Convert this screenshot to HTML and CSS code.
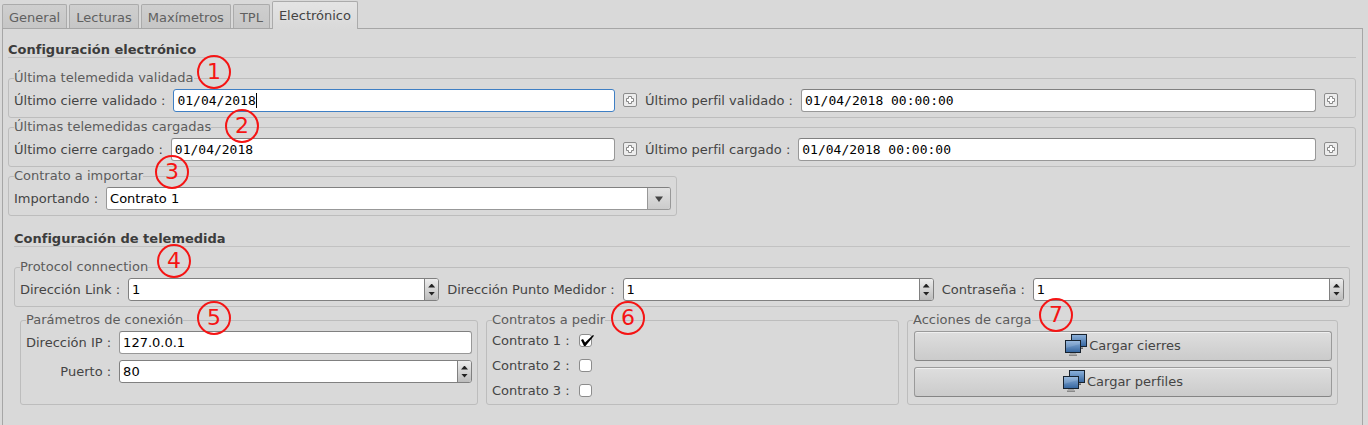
FILE: index.html
```html
<!DOCTYPE html>
<html lang="es">
<head>
<meta charset="utf-8">
<title>Configuración electrónico</title>
<link rel="stylesheet" href="styles.css">
</head>
<body>
<svg class="defs" aria-hidden="true">
  <defs>
    <linearGradient id="screen" x1="0" y1="0" x2="0" y2="1">
      <stop offset="0" stop-color="#8fb3dc"/>
      <stop offset="1" stop-color="#34659f"/>
    </linearGradient>
    <symbol id="plus" viewBox="0 0 14 14">
      <rect x="0.5" y="0.5" width="13" height="13" rx="1.5" fill="#ececec" stroke="#8c8c8c"/>
      <path d="M5.5 3.5h3v2h2v3h-2v2h-3v-2h-2v-3h2z" fill="#fff" stroke="#888"/>
    </symbol>
    <symbol id="computers" viewBox="0 0 22 22">
      <path d="M14 13h4v2h-3z" fill="#999"/>
      <path d="M16 14.500h2" stroke="#666"/>
      <rect x="6.500" y="0.500" width="15" height="12" fill="url(#screen)" stroke="#17222e"/>
      <path d="M5 19h6v1h1v2H4v-2h1z" fill="#a8a8a8"/>
      <path d="M4 21.500h8" stroke="#888"/>
      <rect x="0.500" y="6.500" width="15" height="12" fill="url(#screen)" stroke="#17222e"/>
      <path d="M1 7h14v3L1 14z" fill="#fff" opacity="0.12"/>
    </symbol>
  </defs>
</svg>

<nav class="tabs" role="tablist">
  <button class="tab" role="tab" type="button">General</button>
  <button class="tab" role="tab" type="button">Lecturas</button>
  <button class="tab" role="tab" type="button">Maxímetros</button>
  <button class="tab" role="tab" type="button">TPL</button>
  <button class="tab tab-active" role="tab" type="button" aria-selected="true">Electrónico</button>
</nav>

<main class="panel">
  <h2 class="heading">Configuración electrónico</h2>

  <fieldset class="group">
    <legend>Última telemedida validada<span class="mark mark-1">1</span></legend>
    <div class="halves">
      <div class="field">
        <label for="cierre-val">Último cierre validado :</label>
        <input class="entry date entry-focus" id="cierre-val" type="text" value="01/04/2018">
        <button class="plus" type="button" aria-label="Abrir calendario"><svg><use href="#plus"/></svg></button>
      </div>
      <div class="field">
        <label for="perfil-val">Último perfil validado :</label>
        <input class="entry date" id="perfil-val" type="text" value="01/04/2018 00:00:00">
        <button class="plus" type="button" aria-label="Abrir calendario"><svg><use href="#plus"/></svg></button>
      </div>
    </div>
  </fieldset>

  <fieldset class="group">
    <legend>Últimas telemedidas cargadas<span class="mark mark-2">2</span></legend>
    <div class="halves">
      <div class="field">
        <label for="cierre-car">Último cierre cargado :</label>
        <input class="entry date" id="cierre-car" type="text" value="01/04/2018">
        <button class="plus" type="button" aria-label="Abrir calendario"><svg><use href="#plus"/></svg></button>
      </div>
      <div class="field">
        <label for="perfil-car">Último perfil cargado :</label>
        <input class="entry date" id="perfil-car" type="text" value="01/04/2018 00:00:00">
        <button class="plus" type="button" aria-label="Abrir calendario"><svg><use href="#plus"/></svg></button>
      </div>
    </div>
  </fieldset>

  <div class="contract-row">
    <fieldset class="group">
      <legend>Contrato a importar<span class="mark mark-3">3</span></legend>
      <div class="field">
        <label for="importando">Importando :</label>
        <div class="combo">
          <select id="importando"><option>Contrato 1</option><option>Contrato 2</option><option>Contrato 3</option></select>
          <svg class="combo-arrow" viewBox="0 0 8 6" aria-hidden="true"><path d="M0 0.500h8L4 6z" fill="#444"/></svg>
        </div>
      </div>
    </fieldset>
  </div>

  <section class="remote">
    <h2 class="heading">Configuración de telemedida</h2>

    <fieldset class="group">
      <legend>Protocol connection<span class="mark mark-4">4</span></legend>
      <div class="field">
        <label for="link">Dirección Link :</label>
        <div class="spin">
          <input id="link" type="text" inputmode="numeric" value="1">
          <div class="steps"><button class="up" type="button" aria-label="Más"></button><button class="down" type="button" aria-label="Menos"></button></div>
        </div>
        <label for="punto">Dirección Punto Medidor :</label>
        <div class="spin">
          <input id="punto" type="text" inputmode="numeric" value="1">
          <div class="steps"><button class="up" type="button" aria-label="Más"></button><button class="down" type="button" aria-label="Menos"></button></div>
        </div>
        <label for="clave">Contraseña :</label>
        <div class="spin">
          <input id="clave" type="text" inputmode="numeric" value="1">
          <div class="steps"><button class="up" type="button" aria-label="Más"></button><button class="down" type="button" aria-label="Menos"></button></div>
        </div>
      </div>
    </fieldset>

    <div class="columns">
      <fieldset class="group">
        <legend>Parámetros de conexión<span class="mark mark-5">5</span></legend>
        <div class="params">
          <label for="ip">Dirección IP :</label>
          <input class="entry" id="ip" type="text" value="127.0.0.1">
          <label for="puerto">Puerto :</label>
          <div class="spin">
            <input id="puerto" type="text" inputmode="numeric" value="80">
            <div class="steps"><button class="up" type="button" aria-label="Más"></button><button class="down" type="button" aria-label="Menos"></button></div>
          </div>
        </div>
      </fieldset>

      <fieldset class="group">
        <legend>Contratos a pedir<span class="mark mark-6">6</span></legend>
        <div class="checks">
          <label for="c1">Contrato 1 :</label>
          <div class="tick"><input id="c1" type="checkbox" checked><svg viewBox="0 0 16 13" aria-hidden="true"><path d="M2 6l2-1 2 3.500L14 1l1 0.800L6.500 12H5z" fill="#000"/></svg></div>
          <label for="c2">Contrato 2 :</label>
          <div class="tick"><input id="c2" type="checkbox"></div>
          <label for="c3">Contrato 3 :</label>
          <div class="tick"><input id="c3" type="checkbox"></div>
        </div>
      </fieldset>

      <fieldset class="group">
        <legend>Acciones de carga<span class="mark mark-7">7</span></legend>
        <div class="actions">
          <button class="action" type="button"><svg><use href="#computers"/></svg>Cargar cierres</button>
          <button class="action" type="button"><svg><use href="#computers"/></svg>Cargar perfiles</button>
        </div>
      </fieldset>
    </div>
  </section>
</main>
</body>
</html>
```

FILE: styles.css
```css
* {
  box-sizing: border-box;
}

body {
  display: flex;
  flex-direction: column;
  min-height: 100vh;
  margin: 0;
  padding: 1px 5px 0 2px;
  background: #d9d9d9;
  color: #444;
  font: 13px/17px "DejaVu Sans", sans-serif;
}

button,
input,
select {
  margin: 0;
  font: inherit;
  color: inherit;
}

.defs {
  position: absolute;
  width: 0;
  height: 0;
}

/* Tabs */
.tabs {
  display: flex;
  align-items: flex-end;
  gap: 2px;
}

.tab {
  height: 24px;
  padding: 1px 6px 0;
  border: 1px solid #ababab;
  border-bottom: 0;
  border-radius: 2px 2px 0 0;
  background: linear-gradient(#cfcfcf, #c6c6c6);
  color: #606060;
}

.tab-active {
  position: relative;
  height: 28px;
  margin-bottom: -1px;
  padding-bottom: 1px;
  background: linear-gradient(#e4e4e4, #d9d9d9);
  color: #444;
}

.panel {
  flex: 1;
  padding: 13px 6px 19px 5px;
  border: 1px solid #a6a6a6;
  border-bottom: 0;
}

.heading {
  margin: 0 0 12px;
  border-bottom: 1px solid #c2c2c2;
  font-size: 13px;
  line-height: 15px;
  color: #3c3c3c;
}

/* Framed groups */
.group {
  min-width: 0;
  margin: 0 0 1px;
  padding: 2px 5px 5px;
  border: 1px solid #bdbdbd;
  border-radius: 3px;
}

.group legend {
  position: relative;
  padding: 0 0 2px;
  line-height: 15px;
  color: #5c5c5c;
}

.field {
  display: flex;
  align-items: center;
  gap: 8px;
}

.halves {
  display: grid;
  grid-template-columns: 623fr 693fr;
  gap: 8px;
  padding-right: 12px;
}

.contract-row {
  display: grid;
  grid-template-columns: 669fr 679fr;
}

.entry,
.spin,
.combo {
  flex: 1;
  min-width: 0;
  height: 23px;
  border: 1px solid #989898;
  border-top-color: #808080;
  border-radius: 3px;
  background: #fff;
  color: #000;
}

.entry {
  padding: 0 3px;
}

.date {
  font-family: "DejaVu Sans Mono", monospace;
}

.entry-focus {
  border-color: #3f7fc4;
  background: linear-gradient(#000, #000) no-repeat calc(3px + 10ch) center / 1px 15px #fff;
}

.plus {
  width: 14px;
  height: 15px;
  padding: 0 0 1px;
  border: 0;
  background: none;
}

.plus svg {
  display: block;
  width: 14px;
  height: 14px;
}

/* Drop-down */
.combo {
  position: relative;
}

.combo select {
  width: 100%;
  height: 100%;
  padding: 0 26px 0 3px;
  border: 0;
  border-radius: 2px;
  background: linear-gradient(#e2e2e2, #cbcbcb) no-repeat right / 22px 100%,
    linear-gradient(#989898, #989898) no-repeat right / 23px 100%, #fff;
  appearance: none;
}

.combo-arrow {
  position: absolute;
  top: 8px;
  right: 7px;
  width: 8px;
  height: 6px;
  pointer-events: none;
}

/* Number box with steppers */
.spin {
  display: flex;
  border-color: #808080;
}

.spin input {
  flex: 1;
  min-width: 0;
  padding: 0 3px;
  border: 0;
  border-radius: 3px;
  background: none;
}

.steps {
  display: flex;
  flex-direction: column;
  justify-content: center;
  gap: 4px;
  width: 14px;
  border-left: 1px solid #808080;
  border-radius: 0 2px 2px 0;
  background: linear-gradient(#ededed, #bcbcbc);
}

.steps button {
  width: 7px;
  height: 4px;
  margin: 0 auto;
  padding: 0;
  border: 0;
  background: #222;
}

.steps .up {
  clip-path: polygon(0 100%, 50% 0, 100% 100%);
}

.steps .down {
  clip-path: polygon(0 0, 100% 0, 50% 100%);
}

/* Remote metering */
.remote {
  margin-top: 14px;
  padding: 0 6px;
}

.columns {
  display: grid;
  grid-template-columns: 458fr 413fr 431fr;
  gap: 8px;
  margin-top: 5px;
  padding: 0 12px 0 6px;
}

.columns .group {
  margin: 0;
}

.params {
  display: grid;
  grid-template-columns: auto 1fr;
  gap: 6px 8px;
  align-items: center;
}

.params label {
  text-align: right;
}

.checks {
  display: grid;
  grid-template-columns: auto 1fr;
  grid-auto-rows: 17px;
  gap: 8px 9px;
  align-items: center;
  padding-top: 1px;
}

.tick {
  position: relative;
  height: 13px;
}

.tick input {
  display: block;
  width: 13px;
  height: 13px;
  border: 1px solid #8c8c8c;
  border-radius: 3px;
  background: #fff;
  appearance: none;
}

.tick svg {
  position: absolute;
  top: 0;
  left: 0;
  width: 16px;
  height: 13px;
  pointer-events: none;
}

.actions {
  display: grid;
  gap: 6px;
  padding: 0 0 1px 1px;
}

.action {
  display: flex;
  align-items: center;
  justify-content: center;
  gap: 2px;
  height: 30px;
  padding: 0 0 2px;
  border: 1px solid #9a9a9a;
  border-bottom-color: #858585;
  border-radius: 3px;
  background: linear-gradient(#dedede, #cbcbcb);
  box-shadow: inset 0 1px #efefef;
}

.action svg {
  width: 22px;
  height: 22px;
}

/* Numbered callouts over the groups */
.mark {
  position: absolute;
  z-index: 1;
  width: 34px;
  height: 34px;
  border: 2px solid #f51414;
  border-radius: 50%;
  color: #f51414;
  font-size: 22px;
  line-height: 30px;
  text-align: center;
}

.mark-1 { left: 183px; top: -15px; }
.mark-2 { left: 211px; top: -10px; }
.mark-3 { left: 141px; top: -13px; }
.mark-4 { left: 137px; top: -15px; }
.mark-5 { left: 171px; top: -11px; }
.mark-6 { left: 119px; top: -11px; }
.mark-7 { left: 126px; top: -14px; }
```
